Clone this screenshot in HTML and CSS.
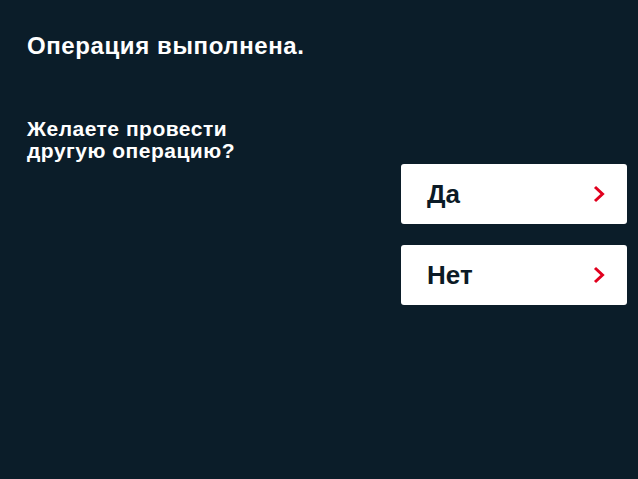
FILE: index.html
```html
<!DOCTYPE html>
<html>
<head>
  <title>Операция выполнена</title>
  <link rel="stylesheet" href="styles.css">
</head>
<body>
  <div class="screen">
    <h1 class="title">Операция выполнена.</h1>
    <p class="question">Желаете провести<br>другую операцию?</p>
    <div class="actions">
      <button class="choice-btn">
        <span>Да</span>
        <svg class="chevron" width="12" height="18" viewBox="0 0 12 18"><path d="M2 2 L9.5 9 L2 16" fill="none" stroke="#e1001e" stroke-width="3"/></svg>
      </button>
      <button class="choice-btn">
        <span>Нет</span>
        <svg class="chevron" width="12" height="18" viewBox="0 0 12 18"><path d="M2 2 L9.5 9 L2 16" fill="none" stroke="#e1001e" stroke-width="3"/></svg>
      </button>
    </div>
  </div>
</body>
</html>
```

FILE: styles.css
```css
html, body {
  margin: 0;
  padding: 0;
  height: 100%;
}

body {
  background-color: #0b1d29;
  font-family: "Liberation Sans", Arial, sans-serif;
  color: #fff;
}

.screen {
  display: flex;
  flex-direction: column;
  padding: 32px 11px 0 27px;
}

.title {
  margin: 0;
  font-size: 24px;
  line-height: 27px;
  letter-spacing: 0.6px;
  font-weight: bold;
}

.question {
  margin: 59px 0 0;
  font-size: 21px;
  line-height: 22px;
  letter-spacing: 0.5px;
  font-weight: bold;
}

.actions {
  display: flex;
  flex-direction: column;
  align-items: flex-end;
  gap: 21px;
  margin-top: 2px;
}

.choice-btn {
  display: flex;
  align-items: center;
  justify-content: space-between;
  width: 226px;
  height: 60px;
  padding: 0 22px 0 26px;
  box-sizing: border-box;
  background-color: #fff;
  border: none;
  border-radius: 3px;
  font-family: "Liberation Sans", Arial, sans-serif;
  font-size: 26px;
  font-weight: bold;
  color: #0b1a26;
  cursor: pointer;
}

.chevron {
  display: block;
}
```
